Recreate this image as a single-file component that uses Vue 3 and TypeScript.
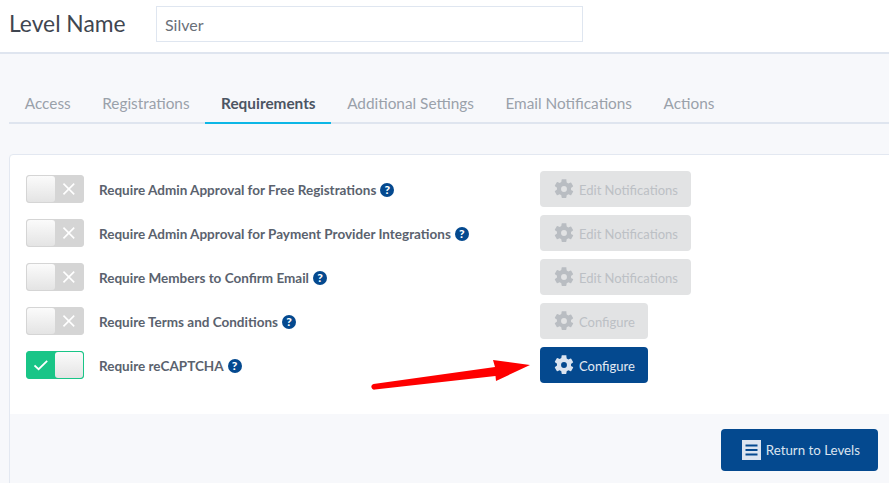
<script setup lang="ts">
const tabs: string[] = ['Access', 'Registrations', 'Requirements', 'Additional Settings', 'Email Notifications', 'Actions']
interface Row { label: string; on: boolean; action: string; active: boolean }
const rows: Row[] = [
  { label: 'Require Admin Approval for Free Registrations', on: false, action: 'Edit Notifications', active: false },
  { label: 'Require Admin Approval for Payment Provider Integrations', on: false, action: 'Edit Notifications', active: false },
  { label: 'Require Members to Confirm Email', on: false, action: 'Edit Notifications', active: false },
  { label: 'Require Terms and Conditions', on: false, action: 'Configure', active: false },
  { label: 'Require reCAPTCHA', on: true, action: 'Configure', active: true },
]
const gear = 'M19.14 12.94c.04-.3.06-.61.06-.94s-.02-.64-.07-.94l2.03-1.58a.49.49 0 0 0 .12-.61l-1.92-3.32a.49.49 0 0 0-.59-.22l-2.39.96a7 7 0 0 0-1.62-.94l-.36-2.54A.48.48 0 0 0 13.92 2h-3.84a.47.47 0 0 0-.47.41l-.36 2.54c-.59.24-1.13.57-1.62.94l-2.39-.96a.48.48 0 0 0-.59.22L2.73 8.47a.47.47 0 0 0 .12.61l2.03 1.58c-.05.3-.08.63-.08.94s.02.64.07.94l-2.03 1.58a.49.49 0 0 0-.12.61l1.92 3.32c.12.22.37.29.59.22l2.39-.96c.5.38 1.03.7 1.62.94l.36 2.54c.05.24.24.41.48.41h3.84c.24 0 .44-.17.47-.41l.36-2.54c.59-.24 1.13-.56 1.62-.94l2.39.96c.22.08.47 0 .59-.22l1.92-3.32a.47.47 0 0 0-.12-.61zM12 15A3 3 0 1 1 12 9a3 3 0 0 1 0 6z'
</script>

<template>
  <div class="page">
    <header class="head">
      <h1 class="title">Level Name</h1>
      <div class="name-input">Silver</div>
    </header>

    <nav class="tabs">
      <span v-for="t in tabs" :key="t" class="tab" :class="{ current: t === 'Requirements' }">{{ t }}</span>
    </nav>

    <section class="card">
      <div class="rows">
        <div v-for="r in rows" :key="r.label" class="row">
          <div class="left">
            <div class="toggle" :class="{ on: r.on }">
              <svg v-if="r.on" class="mark" viewBox="0 0 14 14"><path d="M0.5 7.5l4.2 3.8L13.5 2.8" fill="none" stroke="#fff" stroke-width="1.8" /></svg>
              <span class="knob"></span>
              <svg v-if="!r.on" class="mark" viewBox="0 0 14 14"><path d="M1.5 1.5l11 11M12.5 1.5l-11 11" fill="none" stroke="#fff" stroke-width="1.6" /></svg>
            </div>
            <span class="label">{{ r.label }}</span>
            <span class="help">?</span>
          </div>
          <button class="btn" :class="{ active: r.active }">
            <svg class="gear" viewBox="2.4 1.8 19.2 20.4"><path :d="gear" fill-rule="evenodd" /></svg>
            <span class="btn-text">{{ r.action }}</span>
          </button>
        </div>
      </div>
      <div class="foot">
        <button class="return">
          <svg class="list" viewBox="0 0 19 20">
            <rect width="19" height="20" fill="#dbe4f0" />
            <path d="M3.5 5.5h12M3.5 10h12M3.5 14.5h12" stroke="#04498f" stroke-width="2" />
          </svg>
          Return to Levels
        </button>
      </div>
    </section>

    <svg class="arrow" viewBox="0 0 170 40" width="170" height="40">
      <path d="M3.5 34L125 17l-2-7 37 5-34 16-.5-5L5 39.5a2.8 2.8 0 0 1-1.5-5.5z" fill="#fe0000" />
    </svg>
  </div>
</template>

<style scoped>
.page {
  position: relative;
  width: 889px;
  height: 483px;
  overflow: hidden;
  background: #f7f8fb;
  font-family: "Lato", "Noto Sans", sans-serif;
  color: #4a5360;
}
.head {
  display: flex;
  align-items: center;
  gap: 30px;
  height: 52px;
  padding: 0 0 0 9px;
  background: #fff;
  border-bottom: 2px solid #dfe5ef;
}
.title {
  margin: -6px 0 0;
  font-size: 22.8px;
  font-weight: 400;
  color: #3f4650;
  width: 117px;
  white-space: nowrap;
}
.name-input {
  box-sizing: border-box;
  width: 427px;
  height: 36px;
  padding: 0 8px;
  margin-top: -4px;
  line-height: 36px;
  border: 1px solid #dfe6f0;
  font-size: 16px;
  color: #6a7079;
  background: #fff;
}
.tabs {
  display: flex;
  margin: 30px 0 0 9px;
  height: 38px;
  border-bottom: 2px solid #dfe5ef;
}
.tab {
  box-sizing: border-box;
  height: 40px;
  padding: 10px 15.75px 0;
  font-size: 15.35px;
  color: #9aa1aa;
  white-space: nowrap;
}
.current {
  color: #4c5563;
  font-weight: 700;
  border-bottom: 2px solid #0db7e6;
}
.card {
  box-sizing: border-box;
  margin: 30px 0 0 9px;
  width: 900px;
  height: 340px;
  background: #fff;
  border: 1px solid #e3e8f1;
  border-radius: 4px 0 0 0;
}
.rows {
  display: flex;
  flex-direction: column;
  gap: 8px;
  padding: 16px 0 15px 16px;
  height: 228px;
  box-sizing: content-box;
}
.row {
  display: flex;
  align-items: center;
  height: 36px;
}
.left {
  display: flex;
  align-items: center;
  width: 514px;
}
.toggle {
  box-sizing: border-box;
  display: flex;
  align-items: center;
  width: 58px;
  height: 28px;
  border: 1px solid #d5d5d5;
  border-radius: 3px;
  background: #d5d5d5;
}
.toggle.on {
  background: #19c587;
  border-color: #19c587;
}
.knob {
  box-sizing: border-box;
  width: 29px;
  height: 26px;
  border-radius: 3px;
  background: linear-gradient(#fbfbfb, #e4e4e4);
}
.mark {
  width: 14px;
  height: 14px;
  margin-left: 7px;
  margin-right: 7px;
}
.label {
  margin-left: 15px;
  margin-top: 2px;
  font-size: 13.5px;
  font-weight: 700;
  color: #5a626e;
  white-space: nowrap;
}
.help {
  width: 14px;
  height: 14px;
  margin-left: 4px;
  margin-top: 2px;
  border-radius: 50%;
  background: #04498f;
  color: #fff;
  font-size: 12px;
  font-weight: 900;
  line-height: 14px;
  text-align: center;
}
.btn {
  display: flex;
  align-items: center;
  gap: 5px;
  height: 36px;
  padding: 0 13px 0 14px;
  border: 0;
  border-radius: 4px;
  background: #e2e3e4;
  color: #bcc0c5;
  font: 400 13px "Lato", "Noto Sans", sans-serif;
}
.btn-text {
  margin-top: 2px;
}
.btn.active {
  background: #04498f;
  color: #e3eaf3;
}
.gear {
  width: 20px;
  height: 20px;
  fill: #b9bdc2;
}
.active .gear {
  fill: #dbe4f0;
}
.foot {
  display: flex;
  justify-content: flex-end;
  height: 69px;
  padding: 15px 30px 0 0;
  background: #f7f8fb;
}
.return {
  display: flex;
  align-items: center;
  gap: 5px;
  height: 42px;
  padding: 0 18px 0 21px;
  border: 0;
  border-radius: 4px;
  background: #04498f;
  color: #dbe4f0;
  font: 400 13.3px "Lato", "Noto Sans", sans-serif;
}
.list {
  width: 19px;
  height: 20px;
}
.arrow {
  position: absolute;
  left: 370px;
  top: 350px;
}
</style>
